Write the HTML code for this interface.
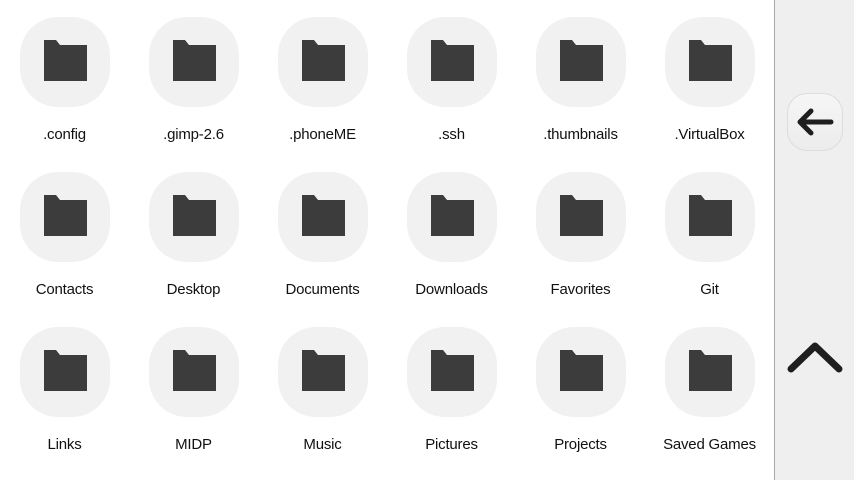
<!DOCTYPE html>
<html><head><style>
body{margin:0;width:854px;height:480px;background:#fff;position:relative;overflow:hidden;font-family:"Liberation Sans",sans-serif}
.it{position:absolute;width:129px;text-align:center}
.tile{width:90px;height:90px;margin:0 auto;background:#f1f1f1;border-radius:38px;position:relative}
.tile svg{position:absolute;left:24px;top:23px}
.lb{margin-top:19px;font-size:15px;color:#111;letter-spacing:-0.2px}
#side{position:absolute;left:774px;top:0;width:80px;height:480px;background:#efefef;border-left:1px solid #a8a8a8}
#back{position:absolute;left:12px;top:93px;width:56px;height:58px;border-radius:20px;background:linear-gradient(#f6f6f6,#ececec);border:1px solid #dcdcdc;box-sizing:border-box}
</style></head><body>
<div id="grid"></div>
<script>
var n=[".config",".gimp-2.6",".phoneME",".ssh",".thumbnails",".VirtualBox","Contacts","Desktop","Documents","Downloads","Favorites","Git","Links","MIDP","Music","Pictures","Projects","Saved Games"];
var h="";
n.forEach(function(t,i){var c=i%6,r=Math.floor(i/6);
h+='<div class="it" style="left:'+(c*129)+'px;top:'+(17+r*155)+'px"><div class="tile"><svg width="43" height="41" viewBox="0 0 43 41"><path d="M0 0H12L16 5H43V41H0Z" fill="#3c3c3c"/></svg></div><div class="lb">'+t+'</div></div>';});
document.getElementById("grid").innerHTML=h;
</script>
<div id="side">
<div id="back"><svg width="56" height="58" viewBox="0 0 56 58" style="position:absolute;left:-1px;top:-1px"><path d="M44 29H13M24 18L13 29L24 40" stroke="#1e1e1e" stroke-width="5" fill="none" stroke-linecap="round" stroke-linejoin="round"/></svg></div>
<svg width="80" height="60" viewBox="0 0 80 60" style="position:absolute;left:0;top:328px"><path d="M16 41L40 18L64 41" stroke="#1e1e1e" stroke-width="7" fill="none" stroke-linecap="round" stroke-linejoin="round"/></svg>
</div>
</body></html>
